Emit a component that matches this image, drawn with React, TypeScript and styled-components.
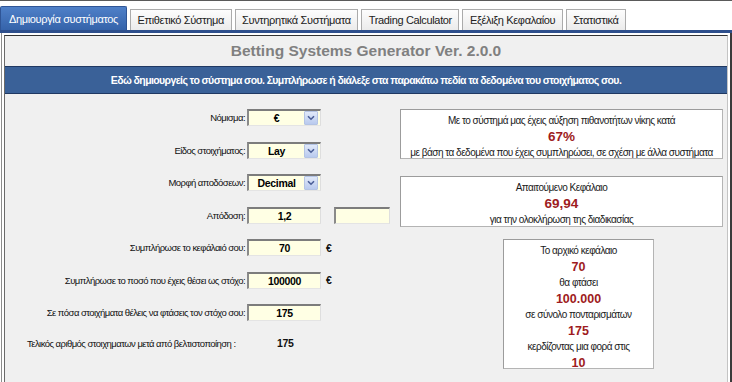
import styled, { createGlobalStyle, css } from 'styled-components';

const GlobalStyle = createGlobalStyle`
  html, body {
    margin: 0;
    padding: 0;
    background: #fff;
    overflow: hidden;
  }
  body {
    font-family: "Liberation Sans", Arial, sans-serif;
    color: #111;
  }
`;

const Page = styled.div`
  width: 732px;
  height: 382px;
  box-sizing: border-box;
  border-top: 1px solid #5a5a5a;
  display: flex;
  flex-direction: column;
`;

const TabBar = styled.div`
  height: 29px;
  flex-shrink: 0;
  display: flex;
  align-items: flex-end;
  gap: 3px;
  border-bottom: 3px solid #2e4f8c;
`;

const Tab = styled.div<{ $active?: boolean }>`
  height: 21px;
  box-sizing: border-box;
  padding: 0 6.5px;
  display: flex;
  align-items: center;
  font-size: 11px;
  letter-spacing: -0.35px;
  white-space: nowrap;
  color: #222;
  border: 1px solid #ababab;
  border-bottom: none;
  background: linear-gradient(#fdfdfd, #ebebeb);
  ${(p) =>
    p.$active &&
    css`
      height: 24px;
      padding: 0 8px;
      color: #fff;
      border-color: #2f5596;
      border-radius: 2px 2px 0 0;
      background: linear-gradient(#4f80c8, #3563aa);
    `}
`;

const Frame = styled.div`
  flex: 1;
  display: flex;
  margin-left: 1px;
  padding: 2px 2px 0 2px;
  border-left: 1px solid #8c8c8c;
  border-right: 2px solid #3a3a3a;
  background: #fff;
`;

const Panel = styled.div`
  flex: 1;
  display: flex;
  flex-direction: column;
  border-top: 1px solid #333;
  border-left: 1px solid #6a6a6a;
  border-right: 1px solid #c4c4c4;
  background: #f0f0f0;
`;

const Title = styled.div`
  height: 30px;
  display: flex;
  align-items: center;
  justify-content: center;
  font-size: 15.5px;
  font-weight: bold;
  color: #808080;
`;

const Banner = styled.div`
  height: 26px;
  display: flex;
  align-items: center;
  justify-content: center;
  border-top: 1px solid #1f3862;
  border-bottom: 1px solid #1f3862;
  background: #3a6198;
  color: #fff;
  font-size: 10.5px;
  font-weight: bold;
  letter-spacing: -0.6px;
  white-space: nowrap;
`;

const Content = styled.div`
  display: grid;
  grid-template-columns: 395px 1fr;
  padding-top: 15px;
`;

const Form = styled.div`
  display: flex;
  flex-direction: column;
  gap: 15.5px;
`;

const Row = styled.div`
  height: 17px;
  display: grid;
  grid-template-columns: 240px auto auto;
  justify-content: start;
  align-items: center;
  column-gap: 2px;
`;

const Label = styled.span<{ $left?: boolean }>`
  text-align: ${(p) => (p.$left ? 'left' : 'right')};
  font-size: 9.5px;
  letter-spacing: -0.55px;
  white-space: nowrap;
`;

const Field = styled.div<{ $width?: number }>`
  width: ${(p) => p.$width ?? 74}px;
  height: 17px;
  box-sizing: border-box;
  display: flex;
  align-items: center;
  border-top: 2px solid #7c7c7c;
  border-left: 2px solid #8a8a8a;
  border-right: 1px solid #dedede;
  border-bottom: 1px solid #e4e4e4;
  background: #ffffe4;
`;

const Value = styled.span`
  flex: 1;
  text-align: center;
  font-size: 10.5px;
  font-weight: bold;
  letter-spacing: -0.3px;
  color: #000;
`;

const ArrowButton = styled.span`
  width: 12px;
  height: 12px;
  margin-right: 2px;
  display: flex;
  align-items: center;
  justify-content: center;
  border: 1px solid #b4c4e4;
  border-radius: 1px;
  background: linear-gradient(#e1e9f9, #b9caee);
`;

const Unit = styled.span<{ $gap?: number }>`
  margin-left: ${(p) => p.$gap ?? 3}px;
  font-size: 10.5px;
  font-weight: bold;
`;

const FinalRow = styled.div`
  height: 17px;
  margin-top: -2px;
  padding-left: 22px;
  display: grid;
  grid-template-columns: 250px auto;
  justify-content: start;
  align-items: center;
`;

const FinalValue = styled.span`
  font-size: 10.5px;
  font-weight: bold;
  letter-spacing: -0.3px;
`;

const Side = styled.div`
  display: flex;
  flex-direction: column;
  align-items: flex-start;
`;

const InfoBox = styled.div<{ $width: number; $height: number; $offset?: number; $gap?: number }>`
  width: ${(p) => p.$width}px;
  height: ${(p) => p.$height}px;
  margin-left: ${(p) => p.$offset ?? 0}px;
  margin-bottom: ${(p) => p.$gap ?? 0}px;
  box-sizing: border-box;
  padding-top: 3px;
  display: flex;
  flex-direction: column;
  align-items: center;
  border: 1px solid #9c9c9c;
  border-right-color: #b4b4b4;
  border-bottom-color: #b4b4b4;
  background: #fff;
`;

const BoxText = styled.span`
  height: 16px;
  line-height: 16px;
  font-size: 10px;
  letter-spacing: -0.5px;
  white-space: nowrap;
  color: #1a1a1a;
`;

const BoxValue = styled.span<{ $big?: boolean }>`
  height: 16px;
  line-height: 16px;
  font-size: ${(p) => (p.$big ? 13.5 : 12.5)}px;
  font-weight: bold;
  color: #9e1b21;
`;

function Arrow() {
  return (
    <ArrowButton>
      <svg width="8" height="6" viewBox="0 0 8 6">
        <path d="M1 1.2 L4 4.2 L7 1.2" fill="none" stroke="#4a5e96" strokeWidth="1.6" />
      </svg>
    </ArrowButton>
  );
}

const tabs = [
  'Δημιουργία συστήματος',
  'Επιθετικό Σύστημα',
  'Συντηρητικά Συστήματα',
  'Trading Calculator',
  'Εξέλιξη Κεφαλαίου',
  'Στατιστικά',
];

export default function App() {
  return (
    <>
      <GlobalStyle />
      <Page>
        <TabBar>
          {tabs.map((t, i) => (
            <Tab key={t} $active={i === 0}>
              {t}
            </Tab>
          ))}
        </TabBar>
        <Frame>
          <Panel>
            <Title>Betting Systems Generator Ver. 2.0.0</Title>
            <Banner>
              Εδώ δημιουργείς το σύστημα σου. Συμπλήρωσε ή διάλεξε στα παρακάτω πεδία τα δεδομένα του
              στοιχήματος σου.
            </Banner>
            <Content>
              <Form>
                <Row>
                  <Label>Νόμισμα:</Label>
                  <Field>
                    <Value>€</Value>
                    <Arrow />
                  </Field>
                </Row>
                <Row>
                  <Label>Είδος στοιχήματος:</Label>
                  <Field>
                    <Value>Lay</Value>
                    <Arrow />
                  </Field>
                </Row>
                <Row>
                  <Label>Μορφή αποδόσεων:</Label>
                  <Field>
                    <Value>Decimal</Value>
                    <Arrow />
                  </Field>
                </Row>
                <Row>
                  <Label>Απόδοση:</Label>
                  <Field>
                    <Value>1,2</Value>
                  </Field>
                  <Unit $gap={11}>
                    <Field $width={56} />
                  </Unit>
                </Row>
                <Row>
                  <Label>Συμπλήρωσε το κεφάλαιό σου:</Label>
                  <Field>
                    <Value>70</Value>
                  </Field>
                  <Unit>€</Unit>
                </Row>
                <Row>
                  <Label>Συμπλήρωσε το ποσό που έχεις θέσει ως στόχο:</Label>
                  <Field>
                    <Value>100000</Value>
                  </Field>
                  <Unit>€</Unit>
                </Row>
                <Row>
                  <Label>Σε πόσα στοιχήματα θέλεις να φτάσεις τον στόχο σου:</Label>
                  <Field>
                    <Value>175</Value>
                  </Field>
                </Row>
                <FinalRow>
                  <Label $left>Τελικός αριθμός στοιχηματων μετά από βελτιστοποίηση :</Label>
                  <FinalValue>175</FinalValue>
                </FinalRow>
              </Form>
              <Side>
                <InfoBox $width={323} $height={50} $gap={17}>
                  <BoxText>Με το σύστημά μας έχεις αύξηση πιθανοτήτων νίκης κατά</BoxText>
                  <BoxValue $big>67%</BoxValue>
                  <BoxText>με βάση τα δεδομένα που έχεις συμπληρώσει, σε σχέση με άλλα συστήματα</BoxText>
                </InfoBox>
                <InfoBox $width={323} $height={51} $gap={12}>
                  <BoxText>Απαιτούμενο Κεφάλαιο</BoxText>
                  <BoxValue $big>69,94</BoxValue>
                  <BoxText>για την ολοκλήρωση της διαδικασίας</BoxText>
                </InfoBox>
                <InfoBox $width={151} $height={130} $offset={103}>
                  <BoxText>Το αρχικό κεφάλαιο</BoxText>
                  <BoxValue>70</BoxValue>
                  <BoxText>θα φτάσει</BoxText>
                  <BoxValue>100.000</BoxValue>
                  <BoxText>σε σύνολο πονταρισμάτων</BoxText>
                  <BoxValue>175</BoxValue>
                  <BoxText>κερδίζοντας μια φορά στις</BoxText>
                  <BoxValue>10</BoxValue>
                </InfoBox>
              </Side>
            </Content>
          </Panel>
        </Frame>
      </Page>
    </>
  );
}
